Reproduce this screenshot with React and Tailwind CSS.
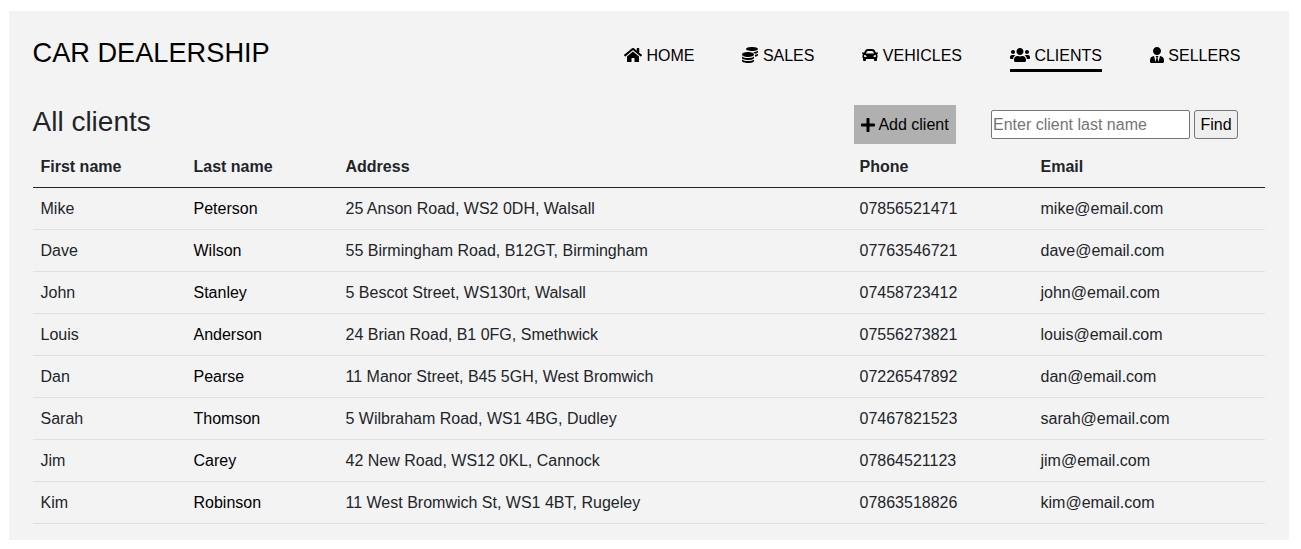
import { FaHome, FaCoins, FaCar, FaUsers, FaUserTie, FaPlus } from "react-icons/fa";

const links = [
  { label: "HOME", Icon: FaHome, size: "w-[18px]" },
  { label: "SALES", Icon: FaCoins, size: "w-4" },
  { label: "VEHICLES", Icon: FaCar, size: "w-4" },
  { label: "CLIENTS", Icon: FaUsers, size: "w-5", active: true },
  { label: "SELLERS", Icon: FaUserTie, size: "w-3.5" },
];

const clients = [
  ["Mike", "Peterson", "25 Anson Road, WS2 0DH, Walsall", "07856521471", "mike@email.com"],
  ["Dave", "Wilson", "55 Birmingham Road, B12GT, Birmingham", "07763546721", "dave@email.com"],
  ["John", "Stanley", "5 Bescot Street, WS130rt, Walsall", "07458723412", "john@email.com"],
  ["Louis", "Anderson", "24 Brian Road, B1 0FG, Smethwick", "07556273821", "louis@email.com"],
  ["Dan", "Pearse", "11 Manor Street, B45 5GH, West Bromwich", "07226547892", "dan@email.com"],
  ["Sarah", "Thomson", "5 Wilbraham Road, WS1 4BG, Dudley", "07467821523", "sarah@email.com"],
  ["Jim", "Carey", "42 New Road, WS12 0KL, Cannock", "07864521123", "jim@email.com"],
  ["Kim", "Robinson", "11 West Bromwich St, WS1 4BT, Rugeley", "07863518826", "kim@email.com"],
];

const columns = [
  { name: "First name", width: "w-[153px]" },
  { name: "Last name", width: "w-[152px]" },
  { name: "Address", width: "w-[514px]" },
  { name: "Phone", width: "w-[181px]" },
  { name: "Email", width: "w-[232px]" },
];

function Header() {
  return (
    <header className="flex h-[84px] items-start justify-between">
      <a className="-ml-[0.5px] pt-[21px] text-[27.2px] leading-[42px] text-black">CAR DEALERSHIP</a>
      <nav className="flex gap-12 pt-[33px] pr-[24.6px]">
        {links.map(({ label, Icon, size, active }) => (
          <a
            key={label}
            className={`flex items-start gap-[4.4px] border-b-[3px] pb-px leading-6 text-black ${
              active ? "border-black" : "border-transparent"
            }`}
          >
            <Icon className={`mt-[3px] h-4 ${size}`} />
            {label}
          </a>
        ))}
      </nav>
    </header>
  );
}

function Toolbar() {
  return (
    <div className="flex h-[50px] items-start justify-between">
      <h1 className="-ml-[0.5px] pt-[10px] text-[28px] leading-[34px] text-[#212529]">All clients</h1>
      <div className="flex items-center gap-[35px] pt-2.5 pr-[27px]">
        <a className="flex h-[39px] w-[102px] items-center gap-[3.4px] bg-[#b0b0b0] pl-[7px] whitespace-nowrap text-black">
          <FaPlus className="h-4 w-3.5" />
          Add client
        </a>
        <form className="flex gap-1">
          <input
            className="h-[29px] w-[199px] rounded-[2px] border border-[#767676] bg-white px-px placeholder:text-[#757575]"
            placeholder="Enter client last name"
          />
          <button
            type="button"
            className="h-[29px] w-11 rounded-[3px] border border-[#767676] bg-[#efefef] text-black"
          >
            Find
          </button>
        </form>
      </div>
    </div>
  );
}

function ClientTable() {
  return (
    <table className="w-[1232px] table-fixed border-collapse text-left leading-6 text-[#212529]">
      <thead>
        <tr className="h-[42px] border-b border-[#212529]">
          {columns.map(({ name, width }) => (
            <th key={name} className={`${width} px-[7.5px] pt-[3px] pb-0 font-bold`}>{name}</th>
          ))}
        </tr>
      </thead>
      <tbody>
        {clients.map((client) => (
          <tr key={client[4]} className="h-[42px] border-b border-[#dfe0e1]">
            {client.map((value, i) => (
              <td key={i} className={`px-[7.5px] pt-px pb-0 ${i === 1 ? "text-black" : ""}`}>{value}</td>
            ))}
          </tr>
        ))}
      </tbody>
    </table>
  );
}

export default function App() {
  return (
    <div className="h-[549px] overflow-hidden bg-white pt-[11px] pl-[9px] font-['Liberation_Sans',Arial,sans-serif] text-base">
      <main className="h-[529px] w-[1280px] bg-[#f3f3f3] px-6">
        <Header />
        <Toolbar />
        <ClientTable />
      </main>
    </div>
  );
}
